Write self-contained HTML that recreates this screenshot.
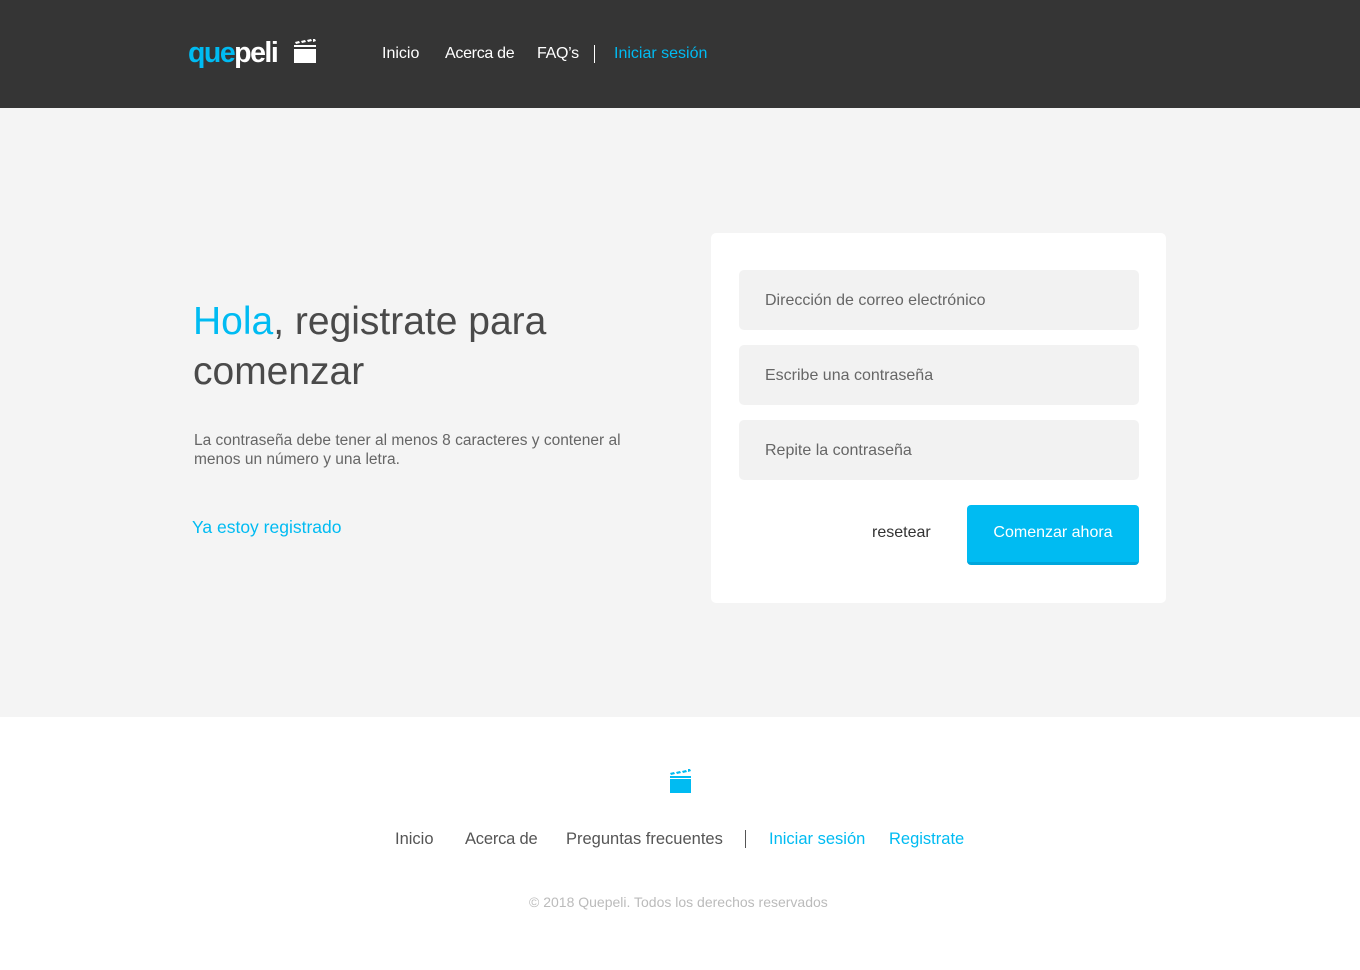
<!DOCTYPE html>
<html><head><meta charset="utf-8"><style>
*{margin:0;padding:0;box-sizing:border-box}
body{width:1360px;height:970px;background:#fff;font-family:"Liberation Sans","DejaVu Sans",sans-serif;position:relative;overflow:hidden}
.hdr{position:absolute;left:0;top:0;width:1360px;height:108px;background:#353535}
.abs{position:absolute;white-space:nowrap}
.main{position:absolute;left:0;top:108px;width:1360px;height:609px;background:#f4f4f4}
.card{position:absolute;left:711px;top:233px;width:455px;height:370px;background:#fff;border-radius:5px}
.inp{position:absolute;left:739px;width:400px;height:60px;background:#f2f2f2;border-radius:5px;color:#666;font-size:16px;padding:22px 26px}
</style></head><body>
<div class="hdr"></div>
<div class="abs" style="left:188px;top:37px;font-size:28.5px;font-weight:bold;letter-spacing:-1.5px"><span style="color:#00bbf2">que</span><span style="color:#fff">peli</span></div>
<svg class="abs" style="left:294px;top:39px" width="24" height="25" viewBox="0 0 24 25"><g fill="#fff"><rect x="0" y="10" width="22" height="14"/><path d="M1 3l4-1 1 2-4 1z M7 2l4-1 1 2-4 1z M13 1l4-1 1 2-4 1z M19 0l2 0 1 2-3 1z M0 6h22v2H0z"/></g></svg>
<div class="abs" style="left:382px;top:45px;color:#fff;font-size:16px">Inicio</div>
<div class="abs" style="left:445px;top:45px;color:#fff;font-size:16px;letter-spacing:-0.3px">Acerca de</div>
<div class="abs" style="left:537px;top:45px;color:#fff;font-size:16px;letter-spacing:-0.3px">FAQ’s</div>
<div class="abs" style="left:594px;top:45px;width:1px;height:18px;background:#fff"></div>
<div class="abs" style="left:614px;top:45px;color:#00bbf2;font-size:16px">Iniciar sesión</div>
<div class="main"></div>
<div class="abs" style="left:193px;top:297px;font-size:39px;color:#4a4a4a;line-height:50px;white-space:normal;width:450px"><span style="color:#00bbf2">Hola</span>, registrate para comenzar</div>
<div class="abs" style="left:194px;top:431px;font-size:15.5px;color:#666;line-height:19px;white-space:normal;width:470px">La contraseña debe tener al menos 8 caracteres y contener al menos un número y una letra.</div>
<div class="abs" style="left:192px;top:517px;font-size:17.5px;color:#00bbf2">Ya estoy registrado</div>
<div class="card"></div>
<div class="inp" style="top:270px">Dirección de correo electrónico</div>
<div class="inp" style="top:345px">Escribe una contraseña</div>
<div class="inp" style="top:420px">Repite la contraseña</div>
<div class="abs" style="left:872px;top:524px;font-size:16px;color:#333">resetear</div>
<div class="abs" style="left:967px;top:505px;width:172px;height:60px;background:#00bbf2;border-radius:4px;border-bottom:3px solid #00a6dc;color:#fff;font-size:16px;text-align:center;line-height:56px">Comenzar ahora</div>
<svg class="abs" style="left:669px;top:769px" width="23" height="25" viewBox="0 0 23 25"><g fill="#00bbf2"><rect x="1" y="10" width="21" height="14"/><path d="M1 4l4-1 1 2-4 1z M7 3l4-1 1 2-4 1z M13 2l4-1 1 2-4 1z M19 0l2 0 1 2-3 1z M1 7h21v2H1z"/></g></svg>
<div class="abs" style="left:395px;top:830px;font-size:16.5px;color:#555">Inicio</div>
<div class="abs" style="left:465px;top:830px;font-size:16.5px;color:#555;letter-spacing:-0.2px">Acerca de</div>
<div class="abs" style="left:566px;top:830px;font-size:16.5px;color:#555">Preguntas frecuentes</div>
<div class="abs" style="left:745px;top:830px;width:1px;height:18px;background:#555"></div>
<div class="abs" style="left:769px;top:830px;font-size:16.5px;color:#00bbf2">Iniciar sesión</div>
<div class="abs" style="left:889px;top:830px;font-size:16.5px;color:#00bbf2">Registrate</div>
<div class="abs" style="left:529px;top:894px;font-size:14px;color:#bbb">© 2018 Quepeli. Todos los derechos reservados</div>
</body></html>
